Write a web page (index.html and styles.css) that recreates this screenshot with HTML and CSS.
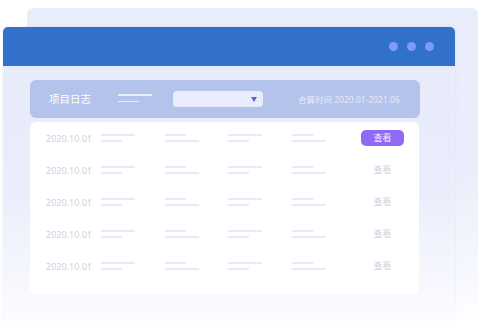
FILE: index.html
```html
<!DOCTYPE html>
<html lang="zh-CN">
<head>
    <meta charset="UTF-8">
    <meta name="viewport" content="width=device-width, initial-scale=1.0">
    <title>项目日志</title>
    <link rel="stylesheet" href="styles.css">
</head>
<body>
    <div class="stage">
        <div class="back-card"></div>

        <div class="window">
            <div class="window-bar">
                <span class="dot"></span>
                <span class="dot"></span>
                <span class="dot"></span>
            </div>

            <div class="toolbar">
                <span class="title">项目日志</span>
                <span class="lines lines-long-top">
                    <i></i><i></i>
                </span>
                <div class="select">
                    <span class="caret"></span>
                </div>
                <span class="range">合算时间 2020.01-2021.06</span>
            </div>

            <div class="table">
                <div class="row">
                    <span class="date">2020.10.01</span>
                    <span class="cell lines-long-top"><i></i><i></i></span>
                    <span class="cell lines-short-top"><i></i><i></i></span>
                    <span class="cell lines-long-top"><i></i><i></i></span>
                    <span class="cell lines-short-top"><i></i><i></i></span>
                    <button class="view active">查看</button>
                </div>
                <div class="row">
                    <span class="date">2020.10.01</span>
                    <span class="cell lines-long-top"><i></i><i></i></span>
                    <span class="cell lines-short-top"><i></i><i></i></span>
                    <span class="cell lines-long-top"><i></i><i></i></span>
                    <span class="cell lines-short-top"><i></i><i></i></span>
                    <button class="view">查看</button>
                </div>
                <div class="row">
                    <span class="date">2020.10.01</span>
                    <span class="cell lines-long-top"><i></i><i></i></span>
                    <span class="cell lines-short-top"><i></i><i></i></span>
                    <span class="cell lines-long-top"><i></i><i></i></span>
                    <span class="cell lines-short-top"><i></i><i></i></span>
                    <button class="view">查看</button>
                </div>
                <div class="row">
                    <span class="date">2020.10.01</span>
                    <span class="cell lines-long-top"><i></i><i></i></span>
                    <span class="cell lines-short-top"><i></i><i></i></span>
                    <span class="cell lines-long-top"><i></i><i></i></span>
                    <span class="cell lines-short-top"><i></i><i></i></span>
                    <button class="view">查看</button>
                </div>
                <div class="row">
                    <span class="date">2020.10.01</span>
                    <span class="cell lines-long-top"><i></i><i></i></span>
                    <span class="cell lines-short-top"><i></i><i></i></span>
                    <span class="cell lines-long-top"><i></i><i></i></span>
                    <span class="cell lines-short-top"><i></i><i></i></span>
                    <button class="view">查看</button>
                </div>
            </div>
        </div>
    </div>
</body>
</html>
```

FILE: styles.css
```css
:root {
    --blue: #3171c9;
    --dot: #7c9cf7;
    --bar: #b4c3ec;
    --pale: #e8ecfb;
    --line: #e6e9f8;
    --muted: #cfd1e0;
    --purple: #9069f6;
}

* {
    box-sizing: border-box;
    margin: 0;
    padding: 0;
}

body {
    font-family: 'Noto Sans', 'Noto Sans CJK SC', sans-serif;
    background: #fff;
}

.stage {
    position: relative;
    width: 480px;
    height: 329px;
    overflow: hidden;
    padding: 27px 0 0 3px;
}

/* card peeking out behind the window */
.back-card {
    position: absolute;
    left: 27px;
    top: 8px;
    width: 451px;
    height: 312px;
    border-radius: 6px;
    background: linear-gradient(to bottom, #e9ecfa 0%, #eceffb 55%, #f9faff 90%, rgba(255,255,255,0) 100%);
}

.window {
    position: relative;
    width: 452px;
    height: 292px;
    border-radius: 5px 5px 0 0;
    background: linear-gradient(to bottom, #e7ebfa 0%, #eaedfb 55%, #f6f7fe 85%, #fcfcff 100%);
    box-shadow: 0 0 3px rgba(110, 130, 200, 0.12);
}

.window-bar {
    height: 39px;
    background: var(--blue);
    border-radius: 5px 5px 0 0;
    display: flex;
    justify-content: flex-end;
    align-items: center;
    gap: 9px;
    padding-right: 21px;
}

.dot {
    width: 9px;
    height: 9px;
    border-radius: 50%;
    background: var(--dot);
}

.toolbar {
    margin: 14px 0 0 27px;
    width: 390px;
    height: 38px;
    border-radius: 6px;
    background: var(--bar);
    display: flex;
    align-items: center;
    padding-left: 19px;
}

.title {
    width: 44px;
    font-size: 10.5px;
    color: #fff;
    line-height: 1;
}

.lines {
    margin-left: 25px;
    width: 34px;
    margin-top: -2px;
}

.lines i {
    display: block;
    height: 1.5px;
    background: var(--pale);
}

.lines i + i {
    margin-top: 5px;
}

.lines-long-top i:first-child,
.lines-short-top i:last-child {
    width: 34px;
}

.lines-long-top i:last-child,
.lines-short-top i:first-child {
    width: 21px;
}

.select {
    margin-left: 21px;
    width: 90px;
    height: 16px;
    border-radius: 4px;
    background: var(--pale);
    display: flex;
    justify-content: flex-end;
    align-items: center;
    padding-right: 6px;
}

.caret {
    width: 0;
    height: 0;
    border-left: 3.5px solid transparent;
    border-right: 3.5px solid transparent;
    border-top: 5px solid #5960de;
}

.range {
    margin-left: 35px;
    font-size: 8.5px;
    color: #e6eaf9;
    white-space: nowrap;
}

.table {
    margin: 4px 0 0 27px;
    width: 389px;
    height: 172px;
    border-radius: 6px;
    background: #fff;
}

.row {
    height: 32px;
    display: flex;
    align-items: center;
    padding-left: 16px;
}

.date {
    width: 55px;
    font-size: 9px;
    color: var(--muted);
}

.cell {
    width: 34px;
    margin-right: 30px;
}

.cell:nth-of-type(3) {
    margin-right: 29px;
}

.cell i {
    display: block;
    height: 2px;
    background: var(--line);
}

.cell i + i {
    margin-top: 4px;
}

.view {
    margin-left: 5px;
    width: 43px;
    height: 16px;
    border: none;
    border-radius: 5px;
    background: transparent;
    font-family: inherit;
    font-size: 9px;
    line-height: 16px;
    color: var(--muted);
}

.view.active {
    background: var(--purple);
    color: #f3efff;
}
```
